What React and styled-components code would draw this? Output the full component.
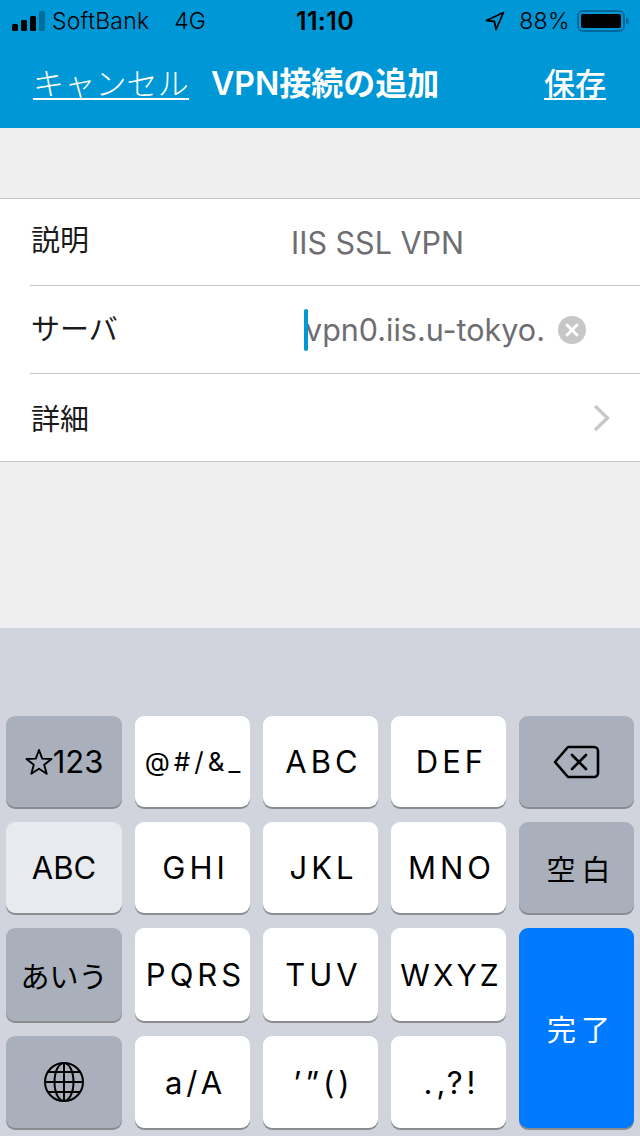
import React from 'react';
import styled, { createGlobalStyle } from 'styled-components';

const GlobalStyle = createGlobalStyle`
  html, body {
    margin: 0;
    padding: 0;
    background: #efefef;
  }
  * {
    box-sizing: border-box;
  }
`;

const Screen = styled.div`
  width: 640px;
  height: 1136px;
  display: flex;
  flex-direction: column;
  overflow: hidden;
  background: #efefef;
  font-family: Inter, "Noto Sans CJK JP", sans-serif;
`;

const Header = styled.header`
  height: 128px;
  background: #0097d6;
  display: flex;
  flex-direction: column;
`;

const StatusBar = styled.div`
  height: 41px;
  display: flex;
  align-items: center;
  padding: 0 10px 0 12px;
  color: #000;
  font-size: 23px;
  font-weight: 300;
`;

const StatusSide = styled.div`
  flex: 1;
  display: flex;
  align-items: center;
  justify-content: ${props => (props.$end ? 'flex-end' : 'flex-start')};
`;

const Carrier = styled.span`
  margin-left: 7px;
  letter-spacing: 0.2px;
`;

const Network = styled.span`
  margin-left: 25px;
`;

const Clock = styled.span`
  margin-left: 8px;
  font-weight: 600;
  font-size: 25px;
  letter-spacing: 0.4px;
`;

const Percent = styled.span`
  margin: 0 7px 0 14px;
  letter-spacing: 0.4px;
`;

const NavBar = styled.nav`
  flex: 1;
  display: flex;
  align-items: flex-start;
  padding: 26px 34px 0 33px;
  color: #fff;
`;

const NavLink = styled.span`
  font-size: 31px;
  line-height: 34px;
  height: 33px;
  border-bottom: 2px solid #fff;
  white-space: nowrap;
  font-weight: ${props => (props.$bold ? 500 : 300)};
  letter-spacing: ${props => (props.$bold ? '0' : '0.2px')};
`;

const NavTitle = styled.span`
  flex: 1;
  margin-left: 22px;
  font-size: 32px;
  line-height: 34px;
  font-weight: 600;
  white-space: nowrap;
`;

const FormArea = styled.main`
  flex: 1;
  padding-top: 70px;
`;

const List = styled.section`
  background: #fff;
  border-top: 1px solid #c8c8c8;
  border-bottom: 1px solid #c8c8c8;
`;

const Row = styled.div`
  height: ${props => (props.$first ? 86 : 88)}px;
  margin-left: 30px;
  display: flex;
  align-items: center;
  border-top: ${props => (props.$first ? 'none' : '1px solid #c8c8c8')};
`;

const Label = styled.span`
  width: 261px;
  padding-left: 1px;
  font-size: 29px;
  color: #1a1a1a;
  font-weight: 400;
  line-height: 40px;
  margin-top: ${props => props.$nudge}px;
`;

const Value = styled.span`
  font-size: 30.5px;
  color: #6d6d72;
  white-space: nowrap;
`;

const Caret = styled.span`
  display: inline-block;
  width: 4px;
  height: 42px;
  margin: 0 -3px 0 13px;
  border-radius: 2px;
  background: #0097d6;
  position: relative;
  z-index: 1;
`;

const ClearButton = styled.span`
  width: 28px;
  height: 28px;
  margin-left: 13px;
  display: flex;
`;

const Chevron = styled.span`
  margin-left: auto;
  margin-right: 29px;
  display: flex;
`;

const Keyboard = styled.section`
  height: 508px;
  background: #d1d4dd;
  padding: 88px 6px 0;
  display: grid;
  grid-template-columns: 116px repeat(4, 115px);
  grid-template-rows: 91px 91px 93px 92px;
  column-gap: 13px;
  row-gap: 15px;
`;

const keyColors = {
  light: '#fff',
  dark: '#a9afbb',
  pale: '#e7eaef',
  blue: '#007aff',
};

const Key = styled.div`
  display: flex;
  align-items: center;
  justify-content: center;
  border-radius: 9px;
  background: ${props => keyColors[props.$kind || 'light']};
  color: ${props => (props.$kind === 'blue' ? '#fff' : '#000')};
  box-shadow: 0 2px 0 #8b8c90;
  font-size: ${props => props.$size ?? 31}px;
  letter-spacing: ${props => props.$spacing ?? 4}px;
  padding-left: ${props => (props.$spacing ?? 4) + (props.$shift ?? 2)}px;
  font-weight: 400;
  white-space: nowrap;
  grid-row: ${props => (props.$rowSpan ? `span ${props.$rowSpan}` : 'auto')};
`;

const SignalIcon = () => (
  <svg width="33" height="20" viewBox="0 0 33 20">
    <rect x="0" y="13" width="6" height="7" rx="1.5" fill="#000" />
    <rect x="9" y="9" width="6" height="11" rx="1.5" fill="#000" />
    <rect x="18" y="5" width="6" height="15" rx="1.5" fill="#000" />
    <rect x="27" y="0" width="6" height="20" rx="1.5" fill="#006d9b" />
  </svg>
);

const LocationIcon = () => (
  <svg width="20" height="20" viewBox="0 0 20 20">
    <path d="M18.5 1.5 L1.5 9.5 L9.5 10.5 L11 18.5 Z" fill="none" stroke="#000" strokeWidth="1.8" strokeLinejoin="round" />
  </svg>
);

const BatteryIcon = () => (
  <svg width="53" height="24" viewBox="0 0 53 24">
    <rect x="1" y="2" width="46" height="20" rx="5" fill="none" stroke="#00689a" strokeWidth="2" />
    <rect x="4" y="5" width="40" height="14" rx="2" fill="#000" />
    <path d="M49 8.5 C51 9.5 52 10.5 52 12 C52 13.5 51 14.5 49 15.5 Z" fill="#00689a" />
  </svg>
);

const ClearIcon = () => (
  <svg width="28" height="28" viewBox="0 0 28 28">
    <circle cx="14" cy="14" r="14" fill="#c7c7c7" />
    <path d="M9 9 L19 19 M19 9 L9 19" stroke="#fff" strokeWidth="3" strokeLinecap="round" />
  </svg>
);

const ChevronIcon = () => (
  <svg width="18" height="28" viewBox="0 0 18 28">
    <path d="M2 2 L14.5 14 L2 26" fill="none" stroke="#c7c7cc" strokeWidth="3.4" />
  </svg>
);

const BackspaceIcon = () => (
  <svg width="48" height="36" viewBox="0 0 48 36">
    <path
      d="M15 3 H41 A4 4 0 0 1 45 7 V29 A4 4 0 0 1 41 33 H15 L2 18 Z"
      fill="none"
      stroke="#000"
      strokeWidth="2.6"
      strokeLinejoin="round"
    />
    <path d="M19 11 L33 25 M33 11 L19 25" stroke="#000" strokeWidth="2.6" strokeLinecap="round" />
  </svg>
);

const GlobeIcon = () => (
  <svg width="42" height="42" viewBox="0 0 42 42" fill="none" stroke="#000" strokeWidth="2">
    <circle cx="21" cy="21" r="19" />
    <ellipse cx="21" cy="21" rx="9.5" ry="19" />
    <path d="M21 2 V40 M2 21 H40 M5 11 H37 M5 31 H37" />
  </svg>
);

const StarIcon = () => (
  <svg width="28" height="28" viewBox="0 0 28 28">
    <path
      d="M14 2 L17.2 10.6 L26.5 11 L19.2 16.8 L21.7 25.8 L14 20.7 L6.3 25.8 L8.8 16.8 L1.5 11 L10.8 10.6 Z"
      fill="none"
      stroke="#000"
      strokeWidth="1.9"
      strokeLinejoin="round"
    />
  </svg>
);

const App = () => {
  return (
    <Screen>
      <GlobalStyle />
      <Header>
        <StatusBar>
          <StatusSide>
            <SignalIcon />
            <Carrier>SoftBank</Carrier>
            <Network>4G</Network>
          </StatusSide>
          <Clock>11:10</Clock>
          <StatusSide $end>
            <LocationIcon />
            <Percent>88%</Percent>
            <BatteryIcon />
          </StatusSide>
        </StatusBar>
        <NavBar>
          <NavLink>キャンセル</NavLink>
          <NavTitle>VPN接続の追加</NavTitle>
          <NavLink $bold>保存</NavLink>
        </NavBar>
      </Header>
      <FormArea>
        <List>
          <Row $first>
            <Label $nudge={-3}>説明</Label>
            <Value>IIS SSL VPN</Value>
          </Row>
          <Row>
            <Label $nudge={1}>サーバ</Label>
            <Caret />
            <Value>vpn0.iis.u-tokyo.</Value>
            <ClearButton><ClearIcon /></ClearButton>
          </Row>
          <Row>
            <Label $nudge={5}>詳細</Label>
            <Chevron><ChevronIcon /></Chevron>
          </Row>
        </List>
      </FormArea>
      <Keyboard>
        <Key $kind="dark" $spacing={0} $shift={0} $size={31}><StarIcon />123</Key>
        <Key $size={26} $spacing={4} $shift={0}>@#/&amp;_</Key>
        <Key>ABC</Key>
        <Key>DEF</Key>
        <Key $kind="dark" $spacing={0} $shift={0}><BackspaceIcon /></Key>

        <Key $kind="pale" $spacing={0} $shift={0}>ABC</Key>
        <Key>GHI</Key>
        <Key>JKL</Key>
        <Key>MNO</Key>
        <Key $kind="dark" $size={29} $spacing={6} $shift={4}>空白</Key>

        <Key $kind="dark" $spacing={0} $shift={0} $size={29}>あいう</Key>
        <Key>PQRS</Key>
        <Key>TUV</Key>
        <Key $size={30} $spacing={3} $shift={2}>WXYZ</Key>
        <Key $kind="blue" $rowSpan={2} $size={29} $spacing={5} $shift={4}>完了</Key>

        <Key $kind="dark" $spacing={0} $shift={0}><GlobeIcon /></Key>
        <Key>a/A</Key>
        <Key>’”()</Key>
        <Key>.,?!</Key>
      </Keyboard>
    </Screen>
  );
};

export default App;
